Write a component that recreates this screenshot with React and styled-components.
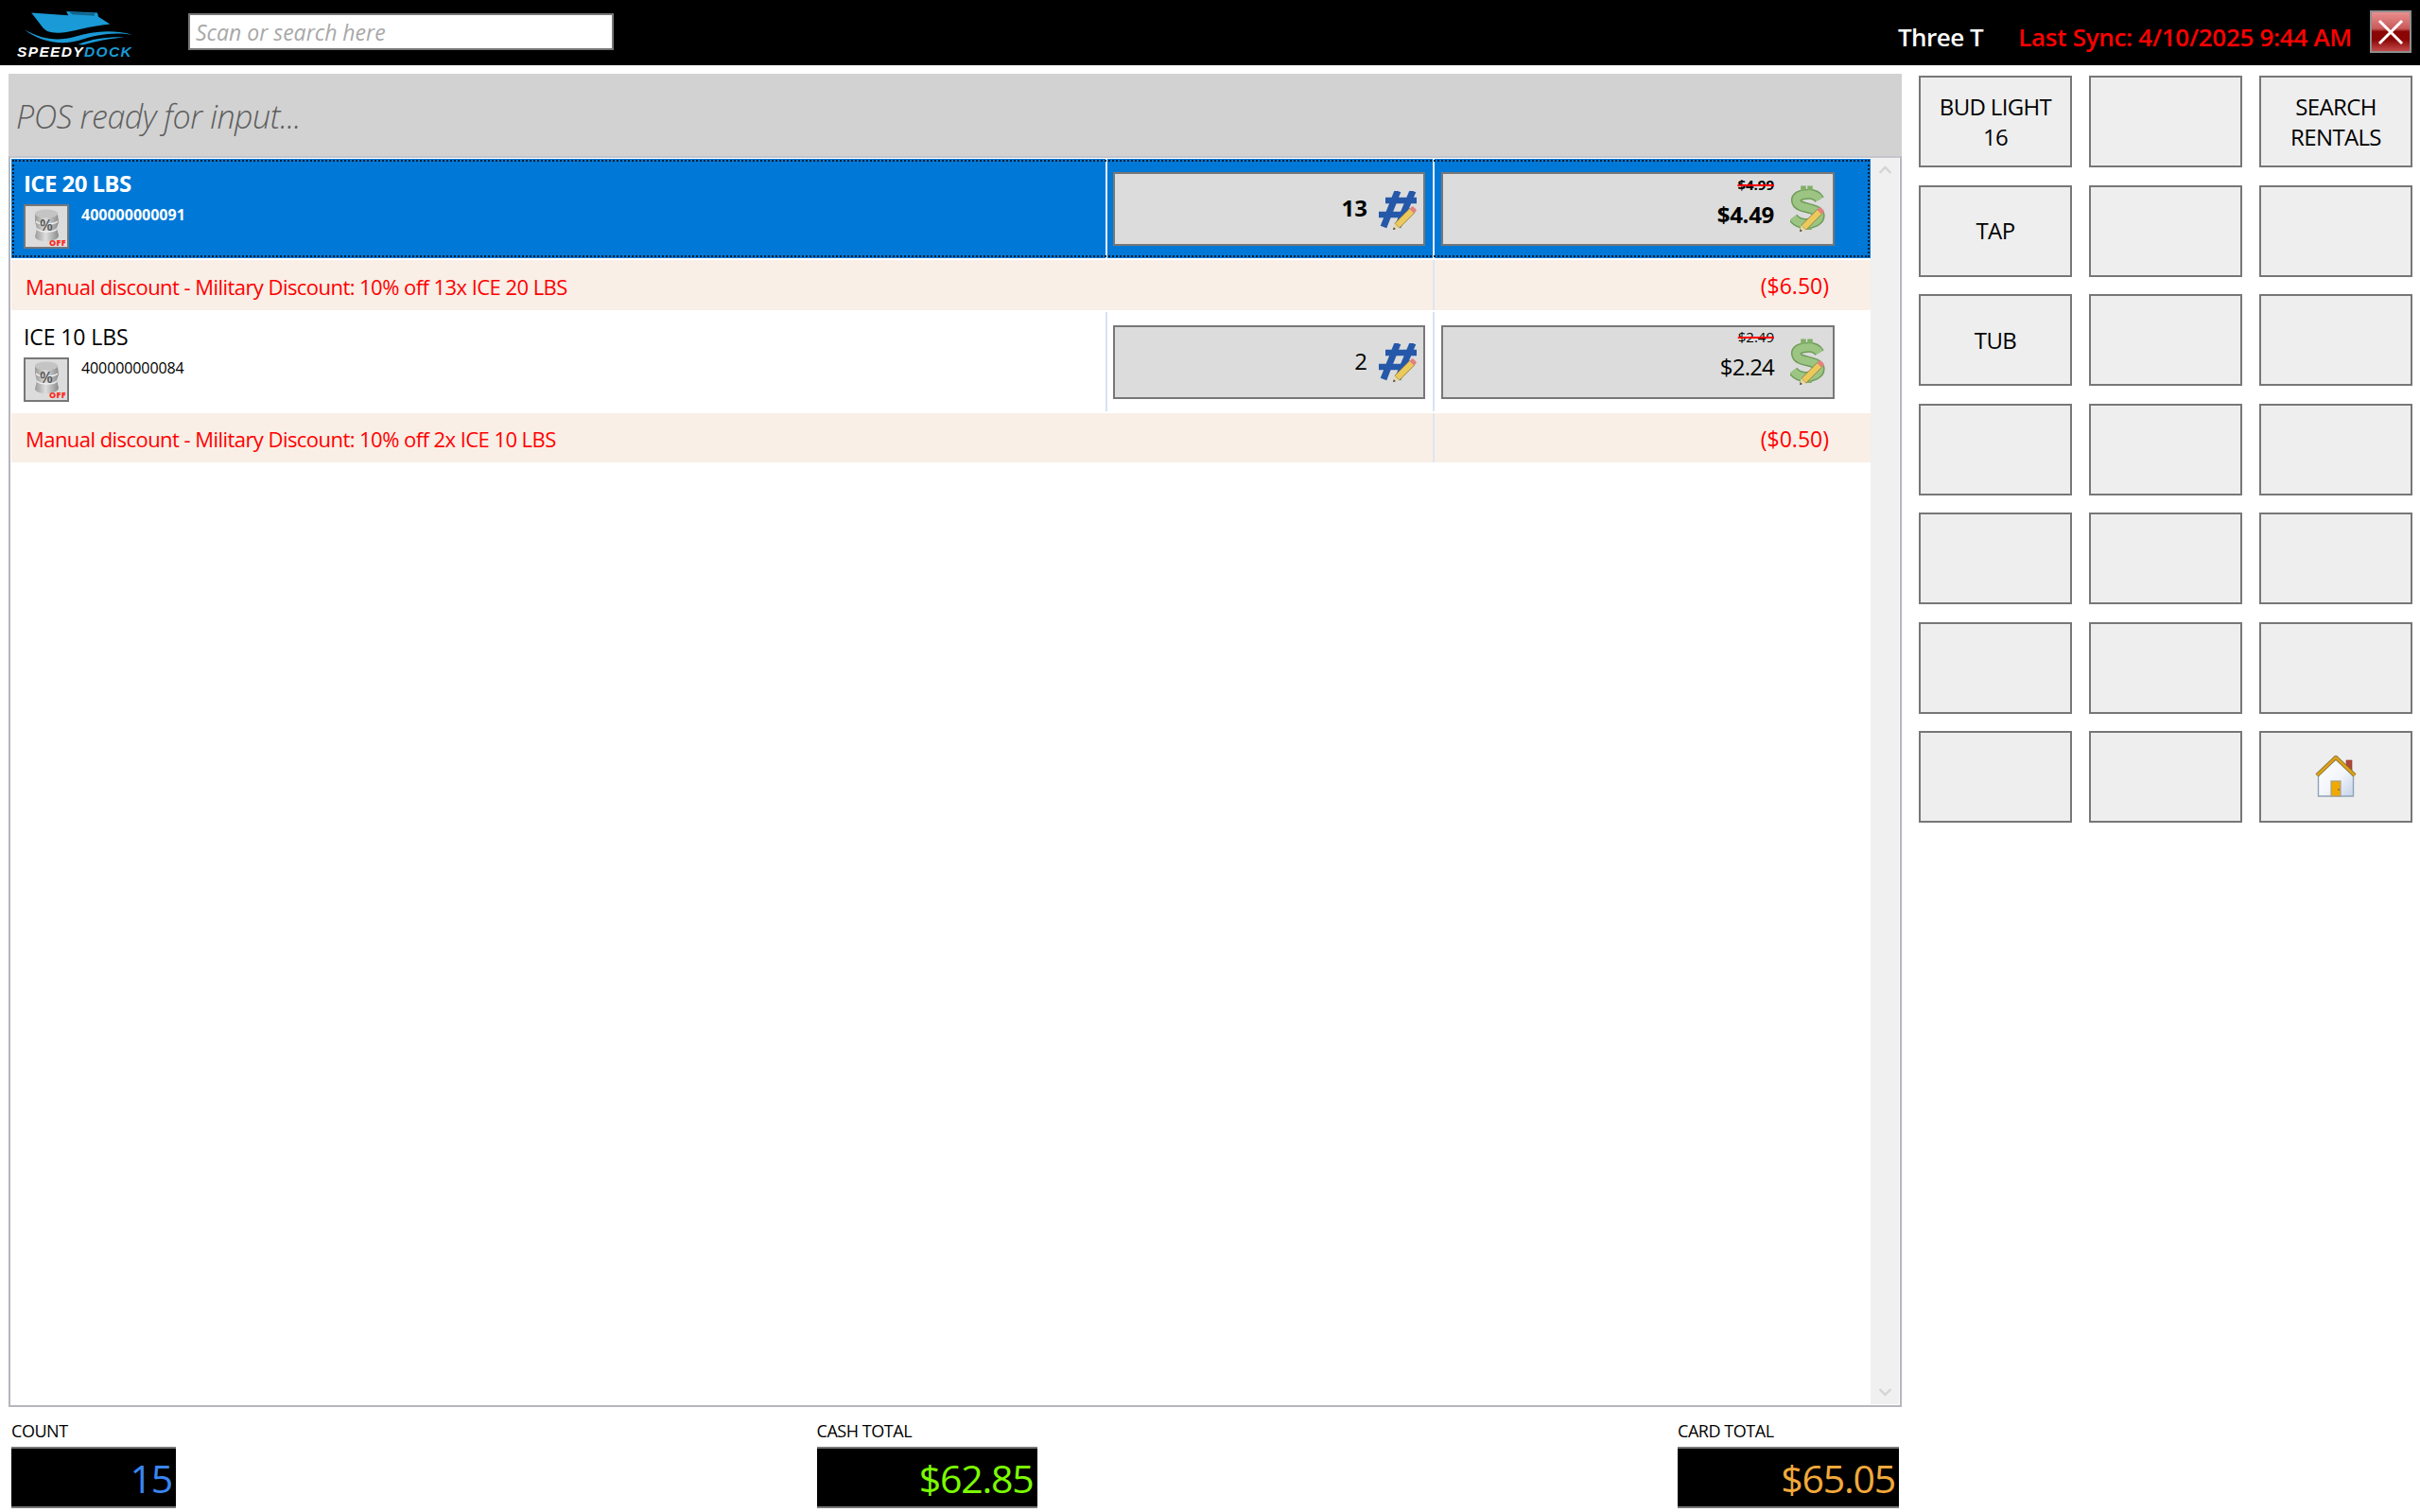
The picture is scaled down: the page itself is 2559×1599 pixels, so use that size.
import React from "react";
import styled, { createGlobalStyle } from "styled-components";

const FONT = `"Open Sans", "Noto Sans", sans-serif`;

const GlobalStyle = createGlobalStyle`
  html, body {
    margin: 0;
    padding: 0;
    background: #fff;
    font-family: ${FONT};
    color: #000;
  }
  * { box-sizing: border-box; }
`;

const buttonLabels = [
  ["BUD LIGHT", "16"], [], ["SEARCH", "RENTALS"],
  ["TAP"], [], [],
  ["TUB"], [], [],
  [], [], [],
  [], [], [],
  [], [], [],
  [], [], ["home"],
];

// icons
const Pencil = ({ x1, y1, x2, y2 }) => {
  const dx = x2 - x1;
  const dy = y2 - y1;
  const len = Math.hypot(dx, dy);
  const angle = (Math.atan2(dy, dx) * 180) / Math.PI;
  return (
    <g transform={`translate(${x1} ${y1}) rotate(${angle})`}>
      <rect x="6" y="-3.4" width={len - 10} height="6.8" fill="#ecc95c" stroke="#8a7a40" strokeWidth="0.8" />
      <path d="M0 0 L6 -3.4 L6 3.4 Z" fill="#e8d8a8" />
      <path d="M0 0 L2.6 -1.4 L2.6 1.4 Z" fill="#333" />
      <rect x={len - 4.5} y="-3.4" width="4.5" height="6.8" rx="1.6" fill="#e48080" />
    </g>
  );
};

const HashIcon = () => (
  <HashSvg width="41" height="42" viewBox="0 0 41 42">
    <g stroke="#2558a8" fill="none">
      <path d="M20 0 L5 38" strokeWidth="7" />
      <path d="M36 0 L20 38" strokeWidth="7" />
      <path d="M7 10 L40 10" strokeWidth="6.5" />
      <path d="M0 25 L32 25" strokeWidth="6.5" />
    </g>
    <Pencil x1={15} y1={41} x2={38} y2={18} />
  </HashSvg>
);

const DollarIcon = () => (
  <svg width="37" height="50" viewBox="0 0 37 50">
    <g fill="none" strokeLinecap="butt">
      <path d="M31 15 C 28 10 22 9 17 9.5 C 9 10 5 13 7 18 C 9 25 29 23 31 31 C 32 38 23 41 15 40.5 C 10 40 6 38 3 34" stroke="#6f9c58" strokeWidth="11" />
      <path d="M14 0.5 L14 8 M21 0.5 L21 8 M13 41 L13 47 M20 41 L20 47" stroke="#7fae66" strokeWidth="5.5" />
      <path d="M31 15 C 28 10 22 9 17 9.5 C 9 10 5 13 7 18 C 9 25 29 23 31 31 C 32 38 23 41 15 40.5 C 10 40 6 38 3 34" stroke="#9cc584" strokeWidth="8" />
    </g>
    <Pencil x1={10} y1={49} x2={34} y2={25} />
  </svg>
);

const CoinsIcon = () => (
  <svg width="44" height="42" viewBox="0 0 44 42">
    <defs>
      <linearGradient id="coin" x1="0" x2="1" y1="0" y2="0">
        <stop offset="0" stopColor="#9a9a9a" />
        <stop offset="0.45" stopColor="#dedede" />
        <stop offset="1" stopColor="#8a8a8a" />
      </linearGradient>
    </defs>
    <path d="M10 8 C10 2 34 2 34 8 L35 16 L33 22 L35 30 C35 38 10 38 10 31 L12 23 L10 15 Z" fill="url(#coin)" />
    <ellipse cx="22" cy="7" rx="12" ry="4.5" fill="#c4c4c4" />
    <path d="M11 15 C14 19 30 19 34 15 M12 23 C16 27 30 27 33 23" stroke="#eee" strokeWidth="1.4" fill="none" />
    <text x="22" y="25" textAnchor="middle" fontSize="16" fontWeight="600" fill="#555" fontFamily={FONT}>%</text>
    <text x="43" y="41" textAnchor="end" fontSize="9" fontWeight="800" letterSpacing="0.4" fill="#fb2a1e" fontFamily={FONT}>OFF</text>
  </svg>
);

const HomeIcon = () => (
  <svg width="44" height="45" viewBox="0 0 44 45">
    <defs>
      <linearGradient id="wall" x1="0" x2="1" y1="0" y2="1">
        <stop offset="0" stopColor="#ffffff" />
        <stop offset="0.55" stopColor="#f2f5fb" />
        <stop offset="1" stopColor="#c4d2e8" />
      </linearGradient>
    </defs>
    <rect x="33" y="5" width="6" height="12" fill="#b0483a" stroke="#8a3a30" strokeWidth="0.6" />
    <path d="M3.5 20 L22 4 L40.5 20 L40.5 43 L3.5 43 Z" fill="url(#wall)" stroke="#8fa3b8" strokeWidth="1.4" />
    <path d="M2 21 L22 2 L42 21" fill="none" stroke="#7d6a3a" strokeWidth="4.4" strokeLinejoin="round" />
    <path d="M2 21 L22 2 L42 21" fill="none" stroke="#dca215" strokeWidth="2.8" strokeLinejoin="round" />
    <rect x="17" y="27" width="10" height="16" fill="#f0a900" stroke="#a8a08c" strokeWidth="1.2" />
    <circle cx="25" cy="36" r="0.9" fill="#666" />
  </svg>
);

const Logo = () => (
  <LogoWrap>
    <svg width="115" height="37" viewBox="0 0 112 36">
      <path d="M7 2.5 L45 5 L43 1 L75 2.5 L76 6.5 L88 14 C66 16 50 22 36 23 C26 23.5 22 21 19 18 Z" fill="#1a9ad6" />
      <path d="M49 4 L46 1.5 L72 3 L72 5.5 Z" fill="#000" opacity="0.35" />
      <path d="M0 20 C18 30 34 32 52 27 C70 22 88 19 111 25 C90 22 74 25 56 31 C36 37 14 31 0 20 Z" fill="#1a9ad6" />
      <path d="M55 35 C70 29 86 27 103 27.5 C88 29 72 32 60 35.5 Z" fill="#1a9ad6" />
    </svg>
    <LogoText>SPEEDY<span>DOCK</span></LogoText>
  </LogoWrap>
);

const ScrollArrow = ({ down }) => (
  <ArrowButton>
    <svg width="15" height="10" viewBox="0 0 15 10">
      <path d={down ? "M1.5 2 L7.5 8 L13.5 2" : "M1.5 8 L7.5 2 L13.5 8"} fill="none" stroke="#d4d4d4" strokeWidth="2.4" />
    </svg>
  </ArrowButton>
);

const Item = ({ name, sku, qty, was, price, selected }) => (
  <ItemRow $selected={selected}>
    <NameCell>
      <ItemName $selected={selected}>{name}</ItemName>
      <ItemMeta>
        <Thumb><CoinsIcon /></Thumb>
        <Sku $selected={selected}>{sku}</Sku>
      </ItemMeta>
    </NameCell>
    <QtyCell $selected={selected}>
      <EditBox>
        <QtyValue $selected={selected}>{qty}</QtyValue>
        <HashIcon />
      </EditBox>
    </QtyCell>
    <PriceCell $selected={selected}>
      <PriceBox>
        <PriceStack>
          <WasPrice $selected={selected}>{was}</WasPrice>
          <NowPrice $selected={selected}>{price}</NowPrice>
        </PriceStack>
        <DollarIcon />
      </PriceBox>
    </PriceCell>
  </ItemRow>
);

const Discount = ({ label, amount }) => (
  <DiscountRow>
    <DiscountLabel>{label}</DiscountLabel>
    <DiscountAmount>{amount}</DiscountAmount>
  </DiscountRow>
);

const App = () => (
  <Page>
    <GlobalStyle />
    <Header>
      <Logo />
      <SearchBox placeholder="Scan or search here" />
      <UserName>Three T</UserName>
      <SyncText>Last Sync: 4/10/2025 9:44 AM</SyncText>
      <CloseButton>
        <svg width="28" height="28" viewBox="0 0 28 28">
          <path d="M2 2 L26 26 M26 2 L2 26" stroke="#fff" strokeWidth="3" />
        </svg>
      </CloseButton>
    </Header>
    <Main>
      <LeftColumn>
        <StatusBar>POS ready for input...</StatusBar>
        <ListBox>
          <Rows>
            <Item selected name="ICE 20 LBS" sku="400000000091" qty="13" was="$4.99" price="$4.49" />
            <Discount label="Manual discount - Military Discount: 10% off 13x ICE 20 LBS" amount="($6.50)" />
            <Item name="ICE 10 LBS" sku="400000000084" qty="2" was="$2.49" price="$2.24" />
            <Discount label="Manual discount - Military Discount: 10% off 2x ICE 10 LBS" amount="($0.50)" />
          </Rows>
          <ScrollTrack>
            <ScrollArrow />
            <ScrollArrow down />
          </ScrollTrack>
        </ListBox>
        <Totals>
          <Total>
            <TotalLabel>COUNT</TotalLabel>
            <TotalValue $width={174} $color="#3a86f2">15</TotalValue>
          </Total>
          <Total>
            <TotalLabel>CASH TOTAL</TotalLabel>
            <TotalValue $width={233} $color="#7cfc00">$62.85</TotalValue>
          </Total>
          <Total>
            <TotalLabel>CARD TOTAL</TotalLabel>
            <TotalValue $width={234} $color="#f2a93b">$65.05</TotalValue>
          </Total>
        </Totals>
      </LeftColumn>
      <ButtonGrid>
        {buttonLabels.map((lines, i) => (
          <GridButton key={i}>
            {lines[0] === "home" ? <HomeIcon /> : lines.map((line) => <span key={line}>{line}</span>)}
          </GridButton>
        ))}
      </ButtonGrid>
    </Main>
  </Page>
);

const Page = styled.div`
  width: 2559px;
  height: 1599px;
  overflow: hidden;
  display: flex;
  flex-direction: column;
`;

const Header = styled.header`
  height: 69px;
  background: #000;
  display: flex;
  align-items: center;
  padding: 0 9px 0 18px;
`;

const LogoWrap = styled.div`
  width: 181px;
  display: flex;
  flex-direction: column;
  svg {
    margin-left: 8px;
    margin-top: 3px;
    display: block;
  }
`;

const LogoText = styled.div`
  font-family: "Liberation Sans", sans-serif;
  font-style: italic;
  font-weight: 700;
  font-size: 15.5px;
  line-height: 14px;
  letter-spacing: 1.35px;
  color: #fff;
  span {
    color: #1a9ad6;
  }
`;

const SearchBox = styled.input`
  width: 450px;
  height: 39px;
  border: 2px solid #777;
  background: #fff;
  padding: 0 0 0 6px;
  font-family: ${FONT};
  font-size: 23px;
  font-style: italic;
  outline: none;
  margin-top: -2px;
  &::placeholder {
    color: #a8a8a8;
    opacity: 1;
  }
`;

const UserName = styled.div`
  margin-left: auto;
  font-size: 26px;
  font-weight: 600;
  letter-spacing: -0.5px;
  color: #fff;
  padding-top: 9px;
`;

const SyncText = styled.div`
  margin-left: 37px;
  font-size: 26px;
  font-weight: 600;
  letter-spacing: -0.3px;
  color: #f00;
  padding-top: 9px;
`;

const CloseButton = styled.button`
  width: 44px;
  height: 45px;
  margin-left: 19px;
  margin-top: -2px;
  padding: 0;
  border: 2px solid #8e8e8e;
  background: linear-gradient(#ea8f8f 0%, #c95a5a 42%, #8a0505 50%, #8a0505 70%, #c44a4a 100%);
  display: flex;
  align-items: center;
  justify-content: center;
`;

const Main = styled.main`
  flex: 1;
  display: flex;
  padding: 9px 8px 0 9px;
`;

const LeftColumn = styled.div`
  width: 2002px;
  display: flex;
  flex-direction: column;
`;

const StatusBar = styled.div`
  height: 87px;
  background: #d2d2d2;
  display: flex;
  align-items: center;
  padding: 3px 0 0 8px;
  font-size: 34px;
  letter-spacing: -0.45px;
  font-weight: 300;
  font-style: italic;
  color: #5e5e5e;
`;

const ListBox = styled.div`
  height: 1323px;
  border: 2px solid #b6b6be;
  border-top-color: #c4c4cc;
  display: flex;
  background: #fff;
`;

const Rows = styled.div`
  width: 1967px;
  padding: 1px 0 0 1px;
  display: flex;
  flex-direction: column;
  gap: 2px;
`;

const ItemRow = styled.div`
  height: 105px;
  display: grid;
  grid-template-columns: 1157px 346px 1fr;
  background: ${(p) => (p.$selected ? "#0078d7" : "#fff")};
  outline: ${(p) => (p.$selected ? "2px dotted #0a1f33" : "none")};
  outline-offset: -3px;
`;

const NameCell = styled.div`
  padding: 11px 0 0 13px;
`;

const ItemName = styled.div`
  font-size: ${(p) => (p.$selected ? "24px" : "23px")};
  line-height: 30px;
  font-weight: ${(p) => (p.$selected ? 700 : 400)};
  letter-spacing: ${(p) => (p.$selected ? "-0.6px" : "-0.1px")};
  color: ${(p) => (p.$selected ? "#fff" : "#000")};
`;

const ItemMeta = styled.div`
  display: flex;
  margin-top: 7px;
`;

const Thumb = styled.div`
  width: 48px;
  height: 47px;
  background: #dcdcdc;
  border: 2px solid #777;
  display: flex;
  align-items: center;
  justify-content: center;
`;

const Sku = styled.div`
  margin-left: 13px;
  font-size: 16px;
  line-height: 22px;
  font-weight: ${(p) => (p.$selected ? 700 : 400)};
  letter-spacing: ${(p) => (p.$selected ? "0" : "-0.1px")};
  color: ${(p) => (p.$selected ? "#fff" : "#000")};
`;

const columnLine = (p) => (p.$selected ? "#e8f2fb" : "#d6e3f0");

const QtyCell = styled.div`
  border-left: 2px solid ${columnLine};
  padding: 14px 8px 0 6px;
`;

const PriceCell = styled.div`
  border-left: 2px solid ${columnLine};
  padding: 14px 0 0 7px;
`;

const EditBox = styled.div`
  height: 78px;
  background: #dcdcdc;
  border: 2px solid #777;
  display: flex;
  align-items: center;
  justify-content: flex-end;
  gap: 12px;
  padding: 0 6px 0 0;
`;

const PriceBox = styled(EditBox)`
  width: 416px;
  gap: 17px;
  padding-right: 8px;
`;

const HashSvg = styled.svg`
  margin-top: 3px;
`;

const QtyValue = styled.div`
  font-size: 24px;
  font-weight: ${(p) => (p.$selected ? 700 : 400)};
  margin-top: -3px;
`;

const PriceStack = styled.div`
  display: flex;
  flex-direction: column;
  align-items: flex-end;
  margin-bottom: 13px;
`;

const WasPrice = styled.div`
  font-size: 15px;
  line-height: 18px;
  font-weight: ${(p) => (p.$selected ? 700 : 400)};
  text-decoration: line-through;
  text-decoration-color: #f00;
  text-decoration-thickness: 2px;
`;

const NowPrice = styled.div`
  font-size: 24px;
  line-height: 34px;
  margin-top: 6px;
  font-weight: ${(p) => (p.$selected ? 700 : 400)};
  letter-spacing: ${(p) => (p.$selected ? "-0.3px" : "-0.8px")};
`;

const DiscountRow = styled.div`
  height: 52.5px;
  background: #f9efe6;
  display: grid;
  grid-template-columns: 1503px 1fr;
  align-items: stretch;
  color: #f00;
`;

const DiscountLabel = styled.div`
  display: flex;
  align-items: center;
  padding: 3px 0 0 15px;
  font-size: 22px;
  letter-spacing: -0.55px;
`;

const DiscountAmount = styled.div`
  border-left: 2px solid #dfe6ee;
  display: flex;
  align-items: center;
  justify-content: flex-end;
  padding: 2px 44px 0 0;
  font-size: 23px;
`;

const ScrollTrack = styled.div`
  width: 30px;
  margin-bottom: 1px;
  background: #f0f0f0;
  display: flex;
  flex-direction: column;
  justify-content: space-between;
`;

const ArrowButton = styled.div`
  height: 26px;
  display: flex;
  align-items: center;
  justify-content: center;
`;

const Totals = styled.div`
  flex: 1;
  display: flex;
  justify-content: space-between;
  padding: 0 3px 4px 3px;
  align-items: flex-end;
`;

const Total = styled.div`
  display: flex;
  flex-direction: column;
`;

const TotalLabel = styled.div`
  font-size: 18px;
  line-height: 24px;
  letter-spacing: -0.45px;
  margin-bottom: 5px;
`;

const TotalValue = styled.div`
  width: ${(p) => p.$width}px;
  height: 65px;
  background: #000;
  border-top: 2px solid #777;
  border-bottom: 2px solid #777;
  color: ${(p) => p.$color};
  display: flex;
  align-items: center;
  justify-content: flex-end;
  padding: 0 4px 0 0;
  font-size: 41px;
  font-weight: 400;
  letter-spacing: -1.2px;
`;

const ButtonGrid = styled.div`
  margin: 2px 0 0 18px;
  display: grid;
  grid-template-columns: repeat(3, 162px);
  grid-auto-rows: 97px;
  column-gap: 18px;
  row-gap: 18.5px;
`;

const GridButton = styled.div`
  background: #eee;
  border: 2px solid #777;
  display: flex;
  flex-direction: column;
  align-items: center;
  justify-content: center;
  font-size: 24px;
  line-height: 32px;
  letter-spacing: -0.65px;
  span {
    display: block;
  }
`;

export default App;
